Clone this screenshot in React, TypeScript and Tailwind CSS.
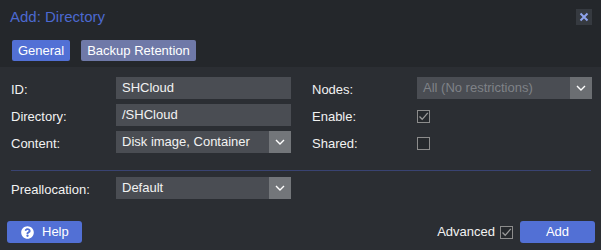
import React from "react";
import { FaQuestionCircle } from "react-icons/fa";

const font = { fontFamily: '"Liberation Sans", Arial, sans-serif' };

function Chevron() {
  return (
    <svg width="10" height="6" viewBox="0 0 10 6" fill="none">
      <path d="M1 1 L5 5 L9 1" stroke="#ffffff" strokeWidth="1.4" />
    </svg>
  );
}

function TextField({ value }: { value: string }) {
  return (
    <div className="w-[175px] h-[22px] bg-[#4a4d53] flex items-center pl-[6px] text-[13px] text-[#f2f2f2]">
      {value}
    </div>
  );
}

function ComboField({ value, disabled }: { value: string; disabled?: boolean }) {
  return (
    <div className="w-[175px] h-[22px] bg-[#4a4d53] flex items-stretch text-[13px]">
      <div className={`flex-1 flex items-center pl-[6px] ${disabled ? "text-[#7f8287]" : "text-[#f2f2f2]"}`}>
        {value}
      </div>
      <div className={`w-[22px] flex items-center justify-center ${disabled ? "bg-[#6b6e72]" : "bg-[#73767a]"}`}>
        <Chevron />
      </div>
    </div>
  );
}

function CheckBox({ checked }: { checked?: boolean }) {
  return (
    <div className="w-[13px] h-[13px] border border-[#8c8c8c] bg-[#26292d] flex items-center justify-center">
      {checked && (
        <svg width="11" height="11" viewBox="0 0 11 11" fill="none">
          <path d="M1.5 5.5 L4.2 8.3 L9.8 1.8" stroke="#9a9a9a" strokeWidth="1.3" />
        </svg>
      )}
    </div>
  );
}

function Row({ label, children }: { label: string; children: React.ReactNode }) {
  return (
    <div className="flex items-center h-[22px]">
      <div className="w-[105px] text-[13px] text-[#f2f2f2] pt-[4px]">{label}</div>
      {children}
    </div>
  );
}

export default function App() {
  return (
    <div className="w-[601px] h-[250px] bg-[#2b2e33] flex flex-col" style={font}>
      <div className="h-[67px] bg-[#24272b] flex flex-col">
        <div className="h-[34px] flex items-center justify-between pl-[10px] pr-[9px]">
          <div className="text-[15px] text-[#4c69d0]">Add: Directory</div>
          <div className="w-[16px] h-[16px] bg-[#363a40] flex items-center justify-center">
            <svg width="10" height="10" viewBox="0 0 10 10" fill="none">
              <path d="M1.5 1.5 L8.5 8.5 M8.5 1.5 L1.5 8.5" stroke="#8ea3ec" strokeWidth="2" />
            </svg>
          </div>
        </div>
        <div className="flex gap-[11px] pl-[12px] mt-[6px]">
          <div className="h-[21px] w-[58px] bg-[#5270d5] rounded-[2px] flex items-center justify-center text-[13px] text-white">
            General
          </div>
          <div className="h-[21px] w-[115px] bg-[#6f79a8] rounded-[2px] flex items-center justify-center text-[13px] text-white">
            Backup Retention
          </div>
        </div>
      </div>

      <div className="flex pl-[11px] pt-[10px]">
        <div className="flex flex-col gap-[5px] w-[301px]">
          <Row label="ID:">
            <TextField value="SHCloud" />
          </Row>
          <Row label="Directory:">
            <TextField value="/SHCloud" />
          </Row>
          <Row label="Content:">
            <ComboField value="Disk image, Container" />
          </Row>
        </div>
        <div className="flex flex-col gap-[5px]">
          <Row label="Nodes:">
            <ComboField value="All (No restrictions)" disabled />
          </Row>
          <Row label="Enable:">
            <div className="pt-[2px]">
              <CheckBox checked />
            </div>
          </Row>
          <Row label="Shared:">
            <div className="pt-[2px]">
              <CheckBox />
            </div>
          </Row>
        </div>
      </div>

      <div className="ml-[11px] mr-[10px] mt-[17px] h-px bg-[#394372]" />

      <div className="pl-[11px] pt-[6px]">
        <Row label="Preallocation:">
          <ComboField value="Default" />
        </Row>
      </div>

      <div className="flex items-center justify-between pl-[7px] pr-[6px] mt-[22px]">
        <div className="h-[22px] w-[75px] bg-[#5270d5] rounded-[3px] flex items-center pl-[14px] gap-[8px] text-[13px] text-white">
          <FaQuestionCircle className="w-[13px] h-[13px] text-white" />
          <span>Help</span>
        </div>
        <div className="flex items-center">
          <span className="text-[13px] text-[#f2f2f2] mr-[5px]">Advanced</span>
          <CheckBox checked />
          <div className="ml-[7px] h-[22px] w-[75px] bg-[#5270d5] rounded-[3px] flex items-center justify-center text-[13px] text-white">
            Add
          </div>
        </div>
      </div>
    </div>
  );
}
